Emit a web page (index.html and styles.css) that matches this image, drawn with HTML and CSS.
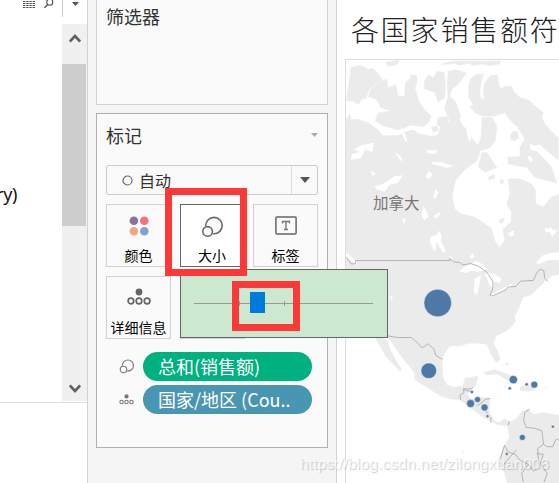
FILE: index.html
```html
<!DOCTYPE html>
<html lang="zh-CN">
<head>
<meta charset="utf-8">
<title>各国家销售额</title>
<link rel="stylesheet" href="styles.css">
</head>
<body>
<svg width="0" height="0" class="defs">
  <symbol id="size" viewBox="0 0 22 22"><g fill="#fcfcfc" stroke="currentColor" stroke-width="1.6"><circle cx="13" cy="9.6" r="8.200"/><circle cx="6.600" cy="15.400" r="6" stroke="none"/><circle cx="6.600" cy="15.400" r="4.800"/></g></symbol>
  <symbol id="detail" viewBox="0 0 24 18"><circle cx="12" cy="4" r="3.4" fill="currentColor"/><g fill="none" stroke="currentColor" stroke-width="1.7"><circle cx="3.9" cy="13" r="2.8"/><circle cx="12" cy="13" r="2.8"/><circle cx="20.1" cy="13" r="2.8"/></g></symbol>
</svg>
<div class="app">
  <aside class="data">
    <div class="tools">
      <svg class="list" width="12" height="8" viewBox="0 0 12 8"><path d="M0 1.5h12M0 3.5h12M0 5.5h12M0 7.5h12" stroke="#555" stroke-dasharray="2.400 .8"/></svg>
      <svg class="search" width="10" height="9" viewBox="0 0 10 9"><circle cx="5.8" cy="2.2" r="3" fill="none" stroke="#555" stroke-width="1.1"/><path d="M3.8 4.5L.4 7.8" stroke="#555" stroke-width="1.4"/></svg>
      <div class="more"><svg width="7" height="4" viewBox="0 0 7 4"><path d="M0 0h7L3.5 4z" fill="#555"/></svg></div>
    </div>
    <div class="fields">
      <div class="list-body"><span>ry)</span></div>
      <div class="scroll">
        <svg width="12" height="10" viewBox="0 0 12 10"><path d="M.8 8.5L6 3l5.200 5.500" fill="none" stroke="#606060" stroke-width="2.600"/></svg>
        <div class="thumb"></div>
        <svg class="down" width="12" height="10" viewBox="0 0 12 10"><path d="M.8 1.500L6 7l5.200-5.500" fill="none" stroke="#606060" stroke-width="2.600"/></svg>
      </div>
    </div>
  </aside>
  <section class="shelves">
    <div class="card filters"><h2>筛选器</h2></div>
    <div class="card marks">
      <div class="head"><h2>标记</h2><svg width="7" height="4" viewBox="0 0 7 4"><path d="M0 0h7L3.500 4z" fill="#aaa"/></svg></div>
      <div class="select">
        <svg width="11" height="11" viewBox="0 0 11 11"><circle cx="5.500" cy="5.500" r="4.500" fill="none" stroke="#666" stroke-width="1.200"/></svg>
        <span>自动</span>
        <i><svg width="10" height="6" viewBox="0 0 10 6"><path d="M0 0h10L5 6z" fill="#555"/></svg></i>
      </div>
      <div class="grid">
        <div class="btn"><svg width="20" height="20" viewBox="0 0 20 20"><circle cx="4.900" cy="4.700" r="4.300" fill="#8a7199"/><circle cx="15.300" cy="4.700" r="4.300" fill="#f87080"/><circle cx="4.900" cy="15.200" r="4.300" fill="#f2a77e"/><circle cx="15.300" cy="15.200" r="4.300" fill="#82a4cb"/></svg><span>颜色</span></div>
        <div class="btn active"><svg width="22" height="22"><use href="#size"/></svg><span>大小</span></div>
        <div class="btn"><svg width="22" height="19" viewBox="0 0 22 19"><rect x=".9" y="1" width="20.200" height="17" rx="1" fill="none" stroke="#666" stroke-width="1.500"/><path d="M7.500 7.500V5.500h7v2M11 5.500v8M9 13.500h4" fill="none" stroke="#777" stroke-width="1.400"/></svg><span>标签</span></div>
        <div class="btn"><svg width="24" height="18"><use href="#detail"/></svg><span>详细信息</span></div>
        <div class="btn"></div>
      </div>
      <div class="pills">
        <div class="row"><svg width="15" height="15"><use href="#size"/></svg><b class="green">总和(销售额)</b></div>
        <div class="row"><svg width="15" height="11"><use href="#detail"/></svg><b class="blue">国家/地区 (Cou..</b></div>
      </div>
    </div>
  </section>
  <main class="sheet">
    <h1>各国家销售额符</h1>
    <svg class="map" width="214" height="424" viewBox="32.500 178 642 1272">
      <g fill="#ebebeb" stroke="#ebebeb" stroke-width="2" stroke-linejoin="round">
        <path d="M48 198l27-5 25 12 12-3 13 10 15 23-18 12-20 17-10 30-10-2-12 18-15-10-20-1 2-26 6-35zM150 185l40-8 2 8-12 7-18 3zM320 190l12-5 28-5h140l-8 10-28 3-20-5-26 5-18-7-26 6-14-5z"/>
        <path d="M108 262l27-22 20-5 4 26 23-10 7 34 20 2 3-42 16-14-2-8 18-1 3 15-7 25 12 38 15 25 22 20-8 20-15 12-30-4-48 14-38-11-30-16 10-24 38-6-30-10-14-26-24-8z"/>
        <path d="M280 222l17 9 9-20 22 3 4 38-2 38-20 12-10-28-30-10-2-20zM342 210l23-4 30 9-18 27-27 24-5 20 17 16 17 48-34 10-15-38 10-34-2-44zM310 350l28-2 4 22-17 16-18-15zM290 378l18-2 2 12-14 6z"/>
        <path d="M402 255L408 235 422 222 447 218 440 238 436 268 438 290 450 300 446 270 451 245 467 225 488 222 493 250 500 265 512 256 532 257 537 270 557 290 572 294 587 300 598 312 627 335 622 350 632 370 650 390 672 412V478L650 460 632 445 618 430 600 435 587 425 587 448 607 452 630 475 652 500 667 548 642 540 602 530 577 500 522 490 520 470 557 468 557 440 572 415 550 380 528 358 512 335 482 345 442 345 422 335 407 320 415 310 403 290z"/>
        <path d="M30 365L38 347 44 339 48 357 66 355 98 365 129 387 145 405H190L215 393 235 386 250 398 285 406 310 404 315 385 337 377 355 350 373 353 385 377 401 387 410 410 430 435 440 410 443 350 472 350 487 375 482 420 467 440 437 450 427 480 392 505 362 540 352 590 360 625 378 640 420 650 470 683 480 720 495 742 512 720 505 688 530 665 532 635 517 610 527 580 522 535 557 535 592 550 604 570 604 610 627 620 652 590 680 580V822L655 826 635 840 610 865 590 885 568 890 560 905 555 922 540 950 543 965 535 975 520 990 485 1008 477 1030 490 1055 497 1080 485 1088 470 1062 457 1033 435 1030 400 1030 380 1038 345 1038 330 1060 322 1082 323 1130 335 1155 355 1163 385 1160 392 1135 430 1130 425 1155 398 1183 410 1200 440 1193 466 1197 464 1235 475 1260 493 1270 510 1258 528 1268 545 1258 565 1235 580 1230 600 1245 625 1240 680 1248V1460H520L510 1420 490 1385 512 1335 525 1315 520 1280 490 1275 450 1255 400 1220 375 1200 345 1198 320 1190 240 1140 240 1120 200 1070 158 1010 70 960 30 830z"/>
        <path d="M442 455l15 0 30 45-35 15-20-15zM462 530l16-8 3 10-18 7zM498 537l9 0-2 14-8-5z"/>
        <path d="M120 1012l32 56 42 45 6-2-32-56-13-33-25-12zM450 1118l32-8 48 18 16 16-28-3-28-18-36 2zM560 1160l22-3 18 8 4 6-24 3-24-3zM514 1088l8 5-5 4zM628 1163h16M505 1161l14 1M383 1355l5 4-1 4z"/>
      </g>
      <g fill="#fff">
        <path d="M75 435l42-10-5 28-22-5-12 25-32 4 6-18 22-5-18-8zM118 556l24-5 36-24 26-3-14 22-26 7-15 21-25-9zM106 510l16 8-8 9zM278 448l32 2-12 10-23-3zM292 483l26 1 38 12-18 5-45-10zM281 511l12 9-10 15-10-5zM295 590l8-24 7 10-7 19zM260 646l6-32 10 20 5 16-13 9zM298 646l19-12-2 10-14 12zM202 652l11 5-6 15zM286 710l17-6 11-13 7 17-2 15 14 28-8 7-20-35-4 34-15-31zM342 765l14 10-9 6zM405 770l9-11 6 12-11 3zM520 700l18-10 2 13-10 6zM632 680l8 5 12-5 5 10 12-2-15 21-7-14-14 1zM162 885l12 7-4 8zM205 385l24-12 12 12-30 8zM200 391l12 10 6 27-10-12zM178 453l18 12 8 16-8-2zM395 370l14-4 4 20-7 42-10-30zM578 468l10-2 8 14-8 4z"/>
        <path d="M373 812L395 797 425 782 450 795 455 810 430 815 410 811 392 819zM420 835l20-10-7 35-6 25-9-8zM450 818l30 3 20 14-4 14-16-4-5 20-10-10zM465 884l40-19 30-15-5 10-30 15-27 14z"/>
        <path d="M605 788l20-22 22-8 33-2v22l-40 2-24 12zM644 838l14-10 22-4v16l-22 3z"/>
        <path d="M30 755l14 10 20 17 3 14-18-14-19-10z"/>
      </g>
      <path d="M528 400l10-10 12 3 3 20-12 8-12-4zM494 657l16-5-3 14-12 3zM648 780l14 2-14 6z" fill="#ebebeb"/>
      <g fill="none" stroke="#aaa" stroke-width="2.600">
        <path d="M34 771l14 20h13v-10h285l-1-7 12 11 18 2 10 7 24-4 22 8 25 17 14 21 6 10-2 24-8 15 12 1 38-18 4-7 24-2 15-16 38-2 10-22 10-12 12 5 2 22 10 10"/>
        <path d="M158 1008l30 5h42l22 20 10 11 18-12 17 15 6 20 20 12M378 1202l-2-15 12-8-2-11h24l4-5M388 1170l20 6M426 1219l12-7 15-13 14-2M440 1223l20 18M469 1252v18M525 1265l-4 12"/>
        <path d="M586 1229l-15 10-3 25 8 20 23 2 24 8 5 40-18 14 4 54-16 14-15-20-27-14-12-16-22-8-12-20M510 1338l-12 40M628 1334l10 8h18l8-20 8-4M546 1352l-18 20-25 30M582 1396l-20 26 5 27M607 1363l20 2-8 28 20 30-10 26"/>
      </g>
      <g fill="#4e79a7" stroke="#fff" stroke-opacity=".65" stroke-width="2">
        <circle cx="309" cy="909" r="41.500"/><circle cx="282" cy="1113" r="23.500"/><circle cx="537" cy="1140" r="12.500"/><circle cx="600" cy="1155" r="10.500"/><circle cx="408" cy="1212" r="12"/><circle cx="429" cy="1200" r="9"/><circle cx="450" cy="1224" r="10.500"/><circle cx="564" cy="1314" r="9"/>
        <circle cx="526" cy="1166" r="5"/><circle cx="577" cy="1154" r="5"/><circle cx="412" cy="1177" r="5"/><circle cx="459" cy="1250" r="4.500"/><circle cx="656" cy="1282" r="4.500"/><circle cx="517" cy="1364" r="4.500"/>
      </g>
    </svg>
    <span class="country">加拿大</span>
  </main>
</div>
<div class="popup">
  <svg width="206" height="67" viewBox="181 270 206 67"><path d="M194 303.500h179M239.500 301v5M284.500 301v5" stroke="#999"/><path d="M250 292h15v21h-15z" fill="#007bdb"/></svg>
</div>
<div class="mark size-mark"></div>
<div class="mark slider-mark"></div>
<div class="watermark">https://blog.csdn.net/zilongxuan008</div>
</body>
</html>
```
FILE: styles.css
```css
* { box-sizing: border-box; }
body {
  margin: 0;
  width: 559px;
  height: 483px;
  overflow: hidden;
  background: #fff;
  font-family: "Noto Sans CJK SC", sans-serif;
  color: #333;
}
svg { display: block; flex: none; }
.defs { position: absolute; }
h1, h2 { margin: 0; font-weight: 400; }
.app { display: flex; width: 559px; height: 483px; }

.data { width: 88px; flex: none; border-right: 1px solid #d2d2d2; }
.tools { display: flex; height: 24px; padding-left: 23px; }
.search { margin-left: 9px; }
.more { height: 17px; margin-left: 8px; padding: 7px 0 0 9px; border-left: 1px solid #ccc; }
.more svg { margin-top: -5px; }
.fields { display: flex; height: 379px; border-bottom: 1px solid #ddd; }
.list-body { width: 62px; overflow: hidden; }
.list-body span {
  display: block;
  margin: 158px 0 0 -4px;
  font: 18px/24px "Noto Sans", sans-serif;
  letter-spacing: -0.3px;
  color: #111;
}
.scroll {
  display: flex;
  flex-direction: column;
  width: 25px;
  height: 377px;
  padding: 9px 0 7px;
  background: #f0f0f0;
}
.scroll svg { margin-left: 6.500px; }
.thumb { width: 24px; height: 162px; margin-top: 21px; background: #cdcdcd; }
.scroll .down { margin-top: auto; }

.shelves { width: 249px; flex: none; padding: 0 8px; background: #f5f5f5; border-right: 1px solid #d2d2d2; }
.card { width: 232px; background: #fafafa; border: 1px solid #d2d2d2; }
.card h2 { font-size: 18px; line-height: 26px; }
.filters { height: 105px; padding: 3px 9px; border-top: 0; }
.marks { height: 335px; margin-top: 8px; padding: 8px 9px 0; border-color: #b0b0b0; }
.head { display: flex; align-items: center; justify-content: space-between; height: 26px; }
.select {
  display: flex;
  align-items: center;
  height: 30px;
  margin-top: 17px;
  padding-left: 15px;
  border: 1px solid #ccc;
  border-radius: 2px;
  font-size: 16px;
  line-height: 28px;
}
.select span { margin-left: 6px; }
.select i { display: flex; align-items: center; justify-content: center; width: 26px; height: 28px; margin-left: auto; border-left: 1px solid #ddd; }
.grid { display: grid; grid-template-columns: repeat(3, 65px); justify-content: space-between; gap: 9px 0; margin-top: 9px; }
.btn {
  display: flex;
  flex-direction: column;
  align-items: center;
  justify-content: space-between;
  height: 63px;
  padding: 10.500px 0 0;
  border: 1px solid #d2d2d2;
  font-size: 14px;
  line-height: 21px;
  color: #000;
  white-space: nowrap;
}
.btn svg { color: #666; }
.active { background: #fff; border-color: #666; }
.pills { display: flex; flex-direction: column; gap: 4px; margin-top: 13px; padding-left: 13px; }
.row { display: flex; align-items: center; gap: 9px; height: 29px; color: #777; }
.row b {
  width: 169px;
  height: 29px;
  padding-left: 15px;
  border-radius: 15px;
  color: #fff;
  font-size: 18px;
  font-weight: 400;
  line-height: 28px;
  white-space: nowrap;
}
.green { background: #00b180; }
.blue { background: #4996b2; }

.sheet { position: relative; width: 222px; padding-left: 8px; overflow: hidden; }
.sheet h1 { height: 59px; padding: 7px 0 0 6px; font-size: 28px; font-weight: 300; line-height: 44px; letter-spacing: 1.800px; white-space: nowrap; color: #222; }
.map { border-top: 1px solid #ddd; border-left: 1px solid #ddd; }
.country { position: absolute; left: 36px; top: 190px; font-size: 15.500px; line-height: 24px; color: #777; }

.popup { position: absolute; left: 180px; top: 269px; width: 208px; height: 69px; background: #cce8cf; border: 1px solid #666; }
.mark { position: absolute; border: 7px solid #fd3838; }
.size-mark { left: 165px; top: 188px; width: 82px; height: 88px; }
.slider-mark { left: 232px; top: 281px; width: 68px; height: 50px; }
.watermark {
  position: absolute;
  left: 300px;
  top: 454px;
  font: 15.500px/20px "Liberation Sans", sans-serif;
  letter-spacing: 0.180px;
  white-space: nowrap;
  color: rgba(255, 255, 255, .7);
  text-shadow: 1px 1px 1px rgba(0, 0, 0, .2);
}
```
